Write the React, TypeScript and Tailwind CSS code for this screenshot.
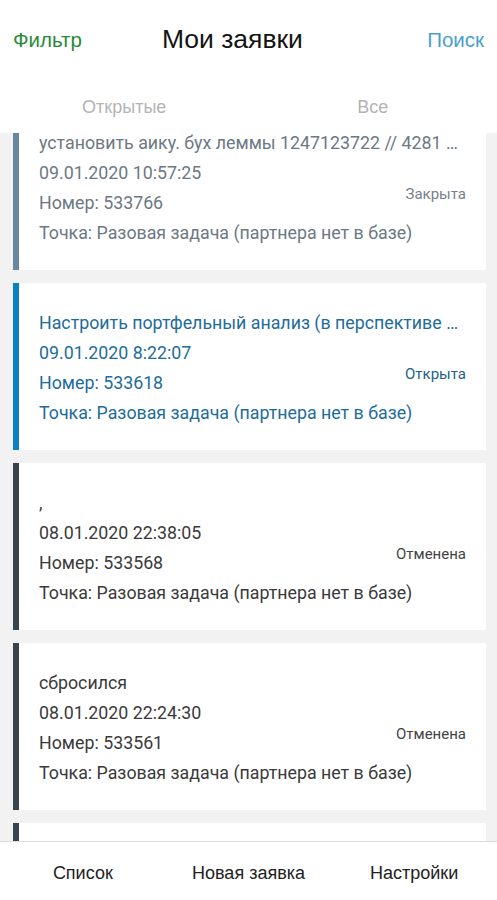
import React from 'react'

type Status = 'closed' | 'open' | 'cancelled'

const tickets: { title: string; date: string; num: string; status: Status }[] = [
  { title: 'установить аику. бух леммы  1247123722 // 4281 1232 4 скан', date: '09.01.2020 10:57:25', num: '533766', status: 'closed' },
  { title: 'Настроить портфельный анализ (в перспективе на будущее)', date: '09.01.2020 8:22:07', num: '533618', status: 'open' },
  { title: ',', date: '08.01.2020 22:38:05', num: '533568', status: 'cancelled' },
  { title: 'сбросился', date: '08.01.2020 22:24:30', num: '533561', status: 'cancelled' },
  { title: 'перезагрузить кассу', date: '08.01.2020 21:02:11', num: '533540', status: 'cancelled' },
]

const styles: Record<Status, { bar: string; text: string; badge: string; label: string }> = {
  closed: { bar: 'bg-[#6a87a0]', text: 'text-[#6c7884]', badge: 'text-[#76818c]', label: 'Закрыта' },
  open: { bar: 'bg-[#0b7fc4]', text: 'text-[#1d6c9c]', badge: 'text-[#245f88]', label: 'Открыта' },
  cancelled: { bar: 'bg-[#35444f]', text: 'text-[#3a3a3a]', badge: 'text-[#444]', label: 'Отменена' },
}

function TicketCard({ t }: { t: (typeof tickets)[number] }) {
  const s = styles[t.status]
  return (
    <div className="flex ml-[13px] mr-[11px] bg-white h-[167px] shrink-0">
      <div className={`w-[6px] shrink-0 ${s.bar}`} />
      <div className={`flex-1 min-w-0 grid grid-cols-[minmax(0,1fr)_auto] grid-rows-[30px_30px_30px_30px] pl-5 pr-5 pt-[25px] text-[17.8px] leading-[30px] ${s.text}`}>
        <div className="col-span-2 row-start-1 col-start-1 min-w-0 truncate">{t.title}</div>
        <div className="row-start-2 col-start-1 min-w-0 whitespace-nowrap">{t.date}</div>
        <div className="row-start-3 col-start-1 min-w-0 whitespace-nowrap">Номер: {t.num}</div>
        <div className="row-start-4 col-start-1 min-w-0 whitespace-nowrap">Точка: Разовая задача (партнера нет в базе)</div>
        <div className={`row-start-1 row-span-4 col-start-2 self-center pt-[12px] text-right text-[15px] leading-[20px] ${s.badge}`}>
          {s.label}
        </div>
      </div>
    </div>
  )
}

export default function App() {
  return (
    <div className="w-[497px] h-[900px] flex flex-col bg-white overflow-hidden font-['Roboto',sans-serif]">
      {/* Header */}
      <div className="relative z-10 h-[76px] shrink-0 flex items-center px-[13px] pt-[4px] bg-white shadow-[0_2px_3px_rgba(0,0,0,0.14)] font-['Liberation_Sans',sans-serif]">
        <span className="text-[20.5px] text-[#2b8a3a]">Фильтр</span>
        <span className="ml-[80px] text-[26.5px] text-[#141414]">Мои заявки</span>
        <span className="ml-auto text-[20.5px] text-[#4a9fd0]">Поиск</span>
      </div>

      {/* Tabs */}
      <div className="relative z-10 h-[57px] shrink-0 grid grid-cols-2 pt-[6px] bg-white font-['Liberation_Sans',sans-serif] text-[18px] text-[#b3b3b3]">
        <div className="flex items-center justify-center">Открытые</div>
        <div className="flex items-center justify-center">Все</div>
      </div>

      {/* List */}
      <div className="flex-1 overflow-hidden bg-[#f2f2f2]">
        <div className="-mt-[30px] flex flex-col gap-[13px]">
          {tickets.map((t) => (
            <TicketCard key={t.num} t={t} />
          ))}
        </div>
      </div>

      {/* Bottom nav */}
      <div className="h-[59px] shrink-0 grid grid-cols-3 pt-[4px] border-t border-[#dcdcdc] bg-white font-['Liberation_Sans',sans-serif] text-[18px] text-[#222]">
        <div className="flex items-center justify-center">Список</div>
        <div className="flex items-center justify-center">Новая заявка</div>
        <div className="flex items-center justify-center">Настройки</div>
      </div>
    </div>
  )
}
